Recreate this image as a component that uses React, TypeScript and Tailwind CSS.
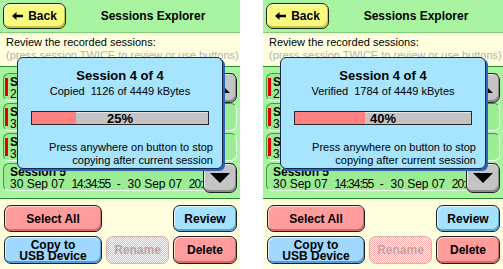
import React from 'react';

type PanelProps = { verb: string; done: number; pct: number };

const rows = [
  { name: 'Session 2', d1: '29 Sep 07', t1: '22:10:04', d2: '30 Sep 07', t2: '06:12', sel: true },
  { name: 'Session 3', d1: '30 Sep 07', t1: '06:15:40', d2: '30 Sep 07', t2: '14:30', sel: true },
  { name: 'Session 4', d1: '30 Sep 07', t1: '08:02:17', d2: '30 Sep 07', t2: '14:31', sel: true },
  { name: 'Session 5', d1: '30 Sep 07', t1: '14:34:55', d2: '30 Sep 07', t2: '20:34', sel: false },
];

const BackArrow = () => (
  <svg width="11" height="8" viewBox="0 0 11 8" className="shrink-0">
    <path d="M0 4 L4.5 0 V2.8 H11 V5.2 H4.5 V8 Z" fill="#000" />
  </svg>
);

const ScrollButton = ({ up }: { up?: boolean }) => (
  <div className="h-[30px] w-[34px] rounded-[7px] border border-[#202020] bg-[#c4c4c4] shadow-[inset_-1px_-2px_0_#8a8a8a,inset_1px_1px_0_#ececec] flex items-center justify-center">
    <svg width="20" height="10" viewBox="0 0 20 10">
      {up ? <path d="M0 10 L10 0 L20 10 Z" fill="#000" /> : <path d="M0 0 L20 0 L10 10 Z" fill="#000" />}
    </svg>
  </div>
);

const Panel = ({ verb, done, pct }: PanelProps) => (
  <div className="relative w-[240px] h-[269px] flex flex-col bg-[#ffffe0] overflow-hidden text-black font-['Liberation_Sans',Arial,sans-serif]">
    {/* header */}
    <div className="h-[33px] shrink-0 bg-[#a8f4a0] border-b border-[#7cd074] flex items-center pl-[3px]">
      <div className="h-[26px] w-[63px] rounded-[7px] border border-[#202020] bg-[#fafa80] shadow-[inset_-1px_-2px_0_#c8c840,inset_1px_1px_0_#ffffd0] flex items-center justify-center gap-[5px]">
        <BackArrow />
        <span className="text-[12px] font-bold leading-none">Back</span>
      </div>
      <div className="flex-1 text-center text-[12px] font-bold">Sessions Explorer</div>
    </div>

    {/* hint */}
    <div className="h-[34px] shrink-0 border-b border-[#2a8a2a] pl-[6px] pt-[3px] text-[11px] leading-[13px] whitespace-nowrap">
      <div>Review the recorded sessions:</div>
      <div className="text-[#b4b4b4]">(press session TWICE to review or use buttons)</div>
    </div>

    {/* list */}
    <div className="relative h-[132px] shrink-0 bg-[#a8f4a0] border-b border-[#2a8a2a] pt-[6px] px-[3px] flex flex-col gap-[2px]">
      {rows.map((r) => (
        <div
          key={r.name}
          className="h-[28px] shrink-0 rounded-[6px] border border-l-[#3c9c3c] border-t-[#3c9c3c] border-r-[#f0fff0] border-b-[#f0fff0] bg-[#9cec94] flex items-center overflow-hidden"
        >
          <div className={`ml-[1px] w-[3px] h-[18px] shrink-0 ${r.sel ? 'bg-[#e80000]' : ''}`} />
          <div className="ml-[2px] pt-[1px] text-[12px] leading-[12px] whitespace-nowrap">
            <div className="font-bold">{r.name}</div>
            <div className="whitespace-pre">
              {r.d1}
              {'  '}
              <span className="tracking-[-1px]">{r.t1}</span>
              {'  -  '}
              {r.d2}
              {'  '}
              <span className="tracking-[-1px]">{r.t2}</span>
            </div>
          </div>
        </div>
      ))}
      <div className="absolute right-[3px] top-[6px] h-[120px] flex flex-col justify-between">
        <ScrollButton up />
        <ScrollButton />
      </div>
    </div>

    {/* buttons */}
    <div className="flex-1 pt-[6px] pl-[4px] pr-[3px] grid grid-cols-[98px_63px_64px] grid-rows-[27px_28px] gap-[4px] text-[12px] font-bold">
      <div className="col-start-1 row-start-1 rounded-[7px] border border-[#202020] bg-[#ff9c9c] shadow-[inset_-1px_-2px_0_#d86a6a,inset_1px_1px_0_#ffd4d4] flex items-center justify-center">
        Select All
      </div>
      <div className="col-start-3 row-start-1 rounded-[7px] border border-[#202020] bg-[#a4e2ff] shadow-[inset_-1px_-2px_0_#5aa6d8,inset_1px_1px_0_#e0f6ff] flex items-center justify-center">
        Review
      </div>
      <div className="col-start-1 row-start-2 rounded-[7px] border border-[#202020] bg-[#a0d8ff] shadow-[inset_-1px_-2px_0_#5a9cd8,inset_1px_1px_0_#e0f4ff] flex flex-col items-center justify-center leading-[11px] pt-[1px]">
        <span>Copy to</span>
        <span>USB Device</span>
      </div>
      <div className="col-start-2 row-start-2 rounded-[7px] border border-[#d8b0b0] bg-[image:repeating-conic-gradient(#ffa8a8_0%_25%,#ffffff_0%_50%)] bg-[length:2px_2px] flex items-center justify-center text-[#b8a4a4]">
        Rename
      </div>
      <div className="col-start-3 row-start-2 rounded-[7px] border border-[#202020] bg-[#ff9c9c] shadow-[inset_-1px_-2px_0_#d86a6a,inset_1px_1px_0_#ffd4d4] flex items-center justify-center">
        Delete
      </div>
    </div>

    {/* progress dialog */}
    <div className="absolute left-[17px] top-[57px] w-[206px] h-[112px] rounded-[6px] border border-[#18284a] bg-[#a6e4ff] shadow-[2px_2px_0_#2a66b8] pt-[10px] flex flex-col">
      <div className="text-center text-[13px] font-bold leading-[16px]">Session 4 of 4</div>
      <div className="text-center text-[11px] leading-[14px] whitespace-pre">{`${verb}  ${done} of 4449 kBytes`}</div>
      <div className="relative ml-[13px] mt-[13px] w-[178px] h-[14px] border border-[#282828] bg-[#c4c4c4] shadow-[inset_0_1px_0_#e4e4e4]">
        <div className="h-full bg-[#ff8080]" style={{ width: `${pct}%` }} />
        <div className="absolute inset-0 flex items-center justify-center text-[13px] font-bold leading-none">{pct}%</div>
      </div>
      <div className="mt-[16px] pr-[9px] text-right text-[11px] leading-[13px] whitespace-nowrap">
        <div>Press anywhere on button to stop</div>
        <div>copying after current session</div>
      </div>
    </div>
  </div>
);

export default function App() {
  return (
    <div className="w-[503px] h-[269px] bg-white flex gap-[23px]">
      <Panel verb="Copied" done={1126} pct={25} />
      <Panel verb="Verified" done={1784} pct={40} />
    </div>
  );
}
